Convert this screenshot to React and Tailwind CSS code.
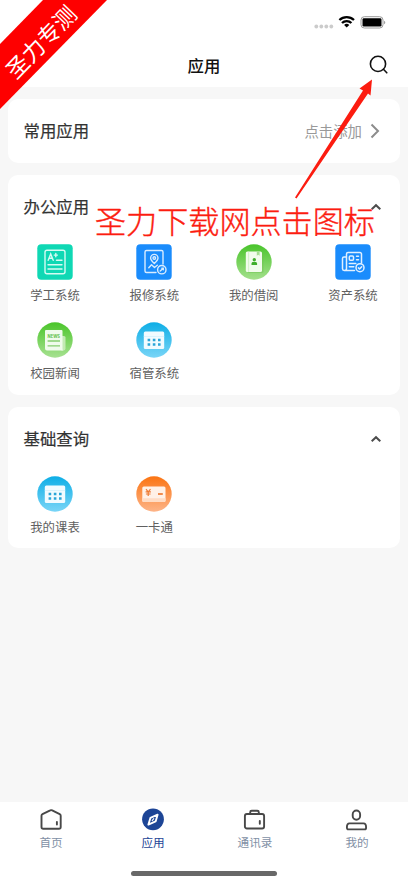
import React from "react";
import clsx from "clsx";

const Gradient = ({ id, from, to }) => (
  <linearGradient id={id} x1="0" y1="0" x2="0" y2="1">
    <stop offset="0" stopColor={from} />
    <stop offset="1" stopColor={to} />
  </linearGradient>
);

const StudentIcon = () => (
  <svg viewBox="0 0 36 36" className="size-9">
    <rect x="0.3" y="0.3" width="35.4" height="35.4" rx="4" fill="#0fd8b4" />
    <g fill="none" stroke="#d5fbf2" strokeWidth="1.4" strokeLinecap="round">
      <rect x="8" y="6.2" width="20" height="23.6" rx="2" />
      <path d="M19.5 16.2h5.5M11 20.7h14M11 25h14" />
      <path d="M11.2 16.3l2.5-6.4 2.5 6.4M12.2 14.3h3M18.8 9.5v3.2M17.2 11.1h3.2" />
    </g>
  </svg>
);

const RepairIcon = () => (
  <svg viewBox="0 0 36 36" className="size-9">
    <rect x="0.3" y="0.3" width="35.4" height="35.4" rx="4" fill="#1a8cfc" />
    <g fill="none" stroke="#d9ecff" strokeWidth="1.4" strokeLinecap="round" strokeLinejoin="round">
      <path d="M20 28.500h-9.500a1.500 1.500 0 0 1-1.500-1.500V8a1.500 1.500 0 0 1 1.500-1.500h15a1.500 1.500 0 0 1 1.500 1.500v12" />
      <path d="M18.300 19.500c-2.200-2-3.700-3.500-3.700-5.400a3.700 3.700 0 0 1 7.400 0c0 1.900-1.500 3.400-3.700 5.400z" />
      <circle cx="18.300" cy="14" r="1.300" />
      <path d="M12.800 23.800l2.700-3 3 2.700 2.800-2.300" />
      <circle cx="25.800" cy="25.700" r="4.200" />
      <path d="M24.200 27l3.100-2.800M25.800 24.200h1.500v1.500" />
    </g>
  </svg>
);

const BorrowIcon = () => (
  <svg viewBox="0 0 36 36" className="size-9">
    <defs>
      <Gradient id="borrow" from="#49c42b" to="#a4e08c" />
    </defs>
    <circle cx="18" cy="18" r="17.700" fill="url(#borrow)" />
    <rect x="11.500" y="9" width="16" height="20" rx="1.500" fill="#6dbf50" opacity="0.4" />
    <rect x="9.800" y="7.600" width="16.200" height="20.400" rx="1.500" fill="#f1fcec" />
    <path d="M12.600 7.600v20.400" stroke="#cdeec2" strokeWidth="0.800" />
    <path d="M20.800 7.600h2.800v4.200l-1.400-1.100-1.400 1.100z" fill="#a5dc92" />
    <circle cx="18.300" cy="15.800" r="1.700" fill="#3fae2b" />
    <path d="M15.500 21v-1.300c0-1.100.7-1.700 1.700-1.700h2.200c1 0 1.700.6 1.700 1.700V21z" fill="#3fae2b" />
  </svg>
);

const AssetIcon = () => (
  <svg viewBox="0 0 36 36" className="size-9">
    <rect x="0.3" y="0.3" width="35.4" height="35.4" rx="4" fill="#1a8cfc" />
    <g fill="none" stroke="#e1f0ff" strokeWidth="1.500" strokeLinecap="round" strokeLinejoin="round">
      <path d="M19.500 26.500H9.200a1.700 1.700 0 0 1-1.700-1.700V14.500a1.500 1.500 0 0 1 1.500-1.500h2.500v11.500a2 2 0 0 1-2 2M11.500 13v-3a1.500 1.500 0 0 1 1.500-1.500h12a1.500 1.500 0 0 1 1.500 1.500v9" />
      <rect x="14.300" y="12" width="4.200" height="4.200" rx="1" />
      <path d="M21.500 12.300h2M21.500 15.700h2M14.300 19.500h6.500M14.300 22.700h4.500" />
      <circle cx="25" cy="23.700" r="4" />
      <path d="M23.400 23.900l1.200 1.100 2.100-2.200" />
    </g>
  </svg>
);

const NewsIcon = () => (
  <svg viewBox="0 0 36 36" className="size-9">
    <defs>
      <Gradient id="news" from="#4ac52a" to="#a7e191" />
    </defs>
    <circle cx="18" cy="18" r="17.700" fill="url(#news)" />
    <path d="M24 14h3a1.500 1.500 0 0 1 1.500 1.500v11a2 2 0 0 1-2 2H24z" fill="#c3eab4" />
    <path d="M9 8h15.500a1 1 0 0 1 1 1v17.500a2 2 0 0 0 1 2H10a2 2 0 0 1-2-2V9a1 1 0 0 1 1-1z" fill="#f0fbec" />
    <text x="16.800" y="15.600" textAnchor="middle" fontSize="4.400" fontWeight="700" fill="#63bf4a" textLength="12.500" lengthAdjust="spacingAndGlyphs" fontFamily="Inter, sans-serif">NEWS</text>
    <path d="M10.600 19h12.400M10.600 23.800h12.400" stroke="#86ce70" strokeWidth="1.300" />
  </svg>
);

const CalendarIcon = () => (
  <svg viewBox="0 0 36 36" className="size-9">
    <defs>
      <Gradient id="calendar" from="#0eaee6" to="#79d5f7" />
    </defs>
    <circle cx="18" cy="18" r="17.700" fill="url(#calendar)" />
    <rect x="7.800" y="9.500" width="20.400" height="17.500" rx="1.500" fill="#f1fbff" />
    <path d="M7.800 14.500h20.400" stroke="#d4f1fc" strokeWidth="0.800" />
    <path d="M11.600 18.100h2.600M16.800 18.100h2.600M22 18.100h2.600M11.600 22.500h2.600M16.800 22.500h2.600M22 22.500h2.600" stroke="#2aa5d8" strokeWidth="2.500" />
  </svg>
);

const CardIcon = () => (
  <svg viewBox="0 0 36 36" className="size-9">
    <defs>
      <Gradient id="card" from="#fb7412" to="#fdb488" />
    </defs>
    <circle cx="18" cy="18" r="17.700" fill="url(#card)" />
    <rect x="6.300" y="10.500" width="23.200" height="15.500" rx="1.500" fill="#fff1e7" />
    <path d="M6.300 22.300h23.200v2.200a1.500 1.500 0 0 1-1.500 1.500H7.800a1.500 1.500 0 0 1-1.500-1.500z" fill="#ffdcc5" />
    <path d="M10 13.200l2.200 2.600 2.300-2.600M12.200 15.800v4.200M9.600 15.800h5.300M9.900 18h4.700" fill="none" stroke="#ee7a33" strokeWidth="1.200" />
    <path d="M22 18h4.800" stroke="#ee7a33" strokeWidth="1.700" />
  </svg>
);

const HomeIcon = () => (
  <svg viewBox="0 0 24 24" className="size-6" fill="none" stroke="#484848" strokeWidth="1.900" strokeLinejoin="round" strokeLinecap="round">
    <path d="M11.200 2.400a2.200 2.200 0 0 1 2 0l7.500 3.700a1.800 1.800 0 0 1 1 1.600v11.300a1.800 1.800 0 0 1-1.800 1.800H4.300a1.800 1.800 0 0 1-1.800-1.800V7.700a1.800 1.800 0 0 1 1-1.600z" />
    <path d="M17.900 14v2.600" />
  </svg>
);

const CompassIcon = () => (
  <svg viewBox="0 0 24 24" className="size-6">
    <circle cx="12" cy="11.300" r="10.900" fill="#1d4596" />
    <path d="M16.600 6.700l-2 6.700-7.200 3.200 2-6.700z" fill="none" stroke="#fff" strokeWidth="1.900" strokeLinejoin="round" />
    <path d="M12.800 10.700l-1.600 1.900" stroke="#fff" strokeWidth="1.100" strokeLinecap="round" />
  </svg>
);

const ContactsIcon = () => (
  <svg viewBox="0 0 24 24" className="size-6" fill="none" stroke="#484848" strokeWidth="1.900" strokeLinejoin="round" strokeLinecap="round">
    <rect x="1.900" y="6" width="19.200" height="14.500" rx="2" />
    <path d="M7.200 5.900V4.200a1.500 1.500 0 0 1 1.500-1.500h5.600a1.500 1.500 0 0 1 1.500 1.500v1.700M16.800 13v2.700" />
  </svg>
);

const MineIcon = () => (
  <svg viewBox="0 0 24 24" className="size-6" fill="none" stroke="#484848" strokeWidth="1.900" strokeLinejoin="round">
    <rect x="7.700" y="2.500" width="7.400" height="9.200" rx="3.700" />
    <path d="M4.500 15.400h14c1.500 0 2.600 1.700 2.600 4.100 0 1.200-.5 1.900-1.500 1.900H3.400c-1 0-1.500-.7-1.500-1.900 0-2.400 1.100-4.100 2.600-4.100z" />
  </svg>
);

const officeApps = [
  { name: "学工系统", Icon: StudentIcon },
  { name: "报修系统", Icon: RepairIcon },
  { name: "我的借阅", Icon: BorrowIcon },
  { name: "资产系统", Icon: AssetIcon },
  { name: "校园新闻", Icon: NewsIcon },
  { name: "宿管系统", Icon: CalendarIcon },
];

const queryApps = [
  { name: "我的课表", Icon: CalendarIcon },
  { name: "一卡通", Icon: CardIcon },
];

const tabs = [
  { name: "首页", Icon: HomeIcon },
  { name: "应用", Icon: CompassIcon, active: true },
  { name: "通讯录", Icon: ContactsIcon },
  { name: "我的", Icon: MineIcon },
];

const StatusBar = () => (
  <div className="flex h-11 items-center justify-end pr-[22px]">
    <svg viewBox="0 0 72 14" className="h-[14px] w-[72px]">
      <g fill="#cbcbcb">
        <circle cx="2.300" cy="11.500" r="1.900" />
        <circle cx="7.300" cy="11.500" r="1.900" />
        <circle cx="12.300" cy="11.500" r="1.900" />
        <circle cx="17.300" cy="11.500" r="1.900" />
      </g>
      <g fill="none" stroke="#000" strokeWidth="2.300">
        <path d="M25.400 5a10.700 10.700 0 0 1 14.600 0" />
        <path d="M28 8a6.600 6.600 0 0 1 9.400 0" />
      </g>
      <path d="M30.100 10a3.700 3.700 0 0 1 5.200 0l-2.600 2.600z" />
      <rect x="47" y="1.700" width="22" height="11.300" rx="3.300" fill="none" stroke="#9b9b9b" />
      <rect x="48.500" y="3.200" width="19" height="8.300" rx="1.300" />
      <path d="M70.200 5.700c1.400.5 1.400 2.900 0 3.500z" fill="#8a8a8a" />
    </svg>
  </div>
);

const CaretUp = () => (
  <svg viewBox="0 0 12 8" className="h-2 w-3" fill="none" stroke="#4c4c4c" strokeWidth="2">
    <path d="M1.700 6.300L6 2.200l4.300 4.100" />
  </svg>
);

const SectionTitle = ({ children }) => (
  <h2 className="pb-px text-[16.4px] text-[#333] [-webkit-text-stroke:0.2px]">{children}</h2>
);

const AppSection = ({ title, apps, className }) => (
  <section className={clsx("rounded-[10px] bg-white", className)}>
    <div className="flex h-16 items-center justify-between pr-[18px] pl-[15.5px]">
      <SectionTitle>{title}</SectionTitle>
      <CaretUp />
    </div>
    <div className="grid grid-cols-[repeat(4,94px)] justify-between gap-y-[11px] pt-[5px]">
      {apps.map(({ name, Icon }) => (
        <div key={name} className="flex h-[67px] flex-col items-center">
          <Icon />
          <span className="mt-[5px] text-[12.4px] leading-5 text-[#606060]">{name}</span>
        </div>
      ))}
    </div>
  </section>
);

const App = () => {
  return (
    <div className="relative flex h-[883px] w-[408px] flex-col overflow-hidden bg-[#f7f7f7] font-['Noto_Sans_CJK_SC',sans-serif]">
      <header className="h-[87px] bg-white">
        <StatusBar />
        <div className="grid h-[42px] grid-cols-[1fr_auto_1fr] items-center px-[19px]">
          <h1 className="col-start-2 text-[16.4px] font-medium text-[#111]">应用</h1>
          <svg viewBox="0 0 20 20" className="size-5 justify-self-end" fill="none" stroke="#111" strokeWidth="1.600" strokeLinecap="round">
            <circle cx="9" cy="8.900" r="7.600" />
            <path d="M14.400 14.300l3.400 3.500" />
          </svg>
        </div>
      </header>

      <main className="flex flex-1 flex-col gap-3 px-2 pt-3">
        <section className="flex h-16 items-center justify-between rounded-[10px] bg-white pr-5 pl-[15.5px]">
          <SectionTitle>常用应用</SectionTitle>
          <div className="flex items-center gap-2">
            <span className="text-[14.4px] text-[#999]">点击添加</span>
            <svg viewBox="0 0 10 16" className="h-4 w-[10px]" fill="none" stroke="#8c8c8c" strokeWidth="2">
              <path d="M1.500 1.500L8 8l-6.500 6.500" />
            </svg>
          </div>
        </section>

        <AppSection title="办公应用" apps={officeApps} className="h-[220px]" />
        <AppSection title="基础查询" apps={queryApps} className="h-[141px]" />
      </main>

      <nav className="flex h-[81px] flex-col items-center justify-between bg-white pb-[7px]">
        <div className="grid w-full grid-cols-4 pt-[6px]">
          {tabs.map(({ name, Icon, active }) => (
            <div key={name} className="flex flex-col items-center">
              <Icon />
              <span
                className={clsx(
                  "mt-px text-[11.600px] leading-[18px]",
                  active ? "text-[#1d4596]" : "text-[#8290a5]"
                )}
              >
                {name}
              </span>
            </div>
          ))}
        </div>
        <div className="h-[5px] w-[146px] rounded-full bg-[#686868]" />
      </nav>

      {/* corner ribbon */}
      <div className="absolute top-0 left-0 h-[109px] w-[107px] bg-[#fe0000] [clip-path:polygon(43px_0,107px_0,0_109px,0_44px)]" />
      <span className="absolute top-[29px] left-[-6px] w-[92px] -rotate-[46deg] text-center text-[22.5px] leading-6 whitespace-nowrap text-white">
        圣力专测
      </span>

      {/* annotation */}
      <p className="absolute top-[197px] left-[95px] text-[31.100px] leading-[46px] font-light whitespace-nowrap text-[#fc1c10] [-webkit-text-stroke:0.35px]">
        圣力下载网点击图标
      </p>
      <svg viewBox="0 0 90 130" className="absolute top-[75px] left-[290px] h-[130px] w-[90px]" fill="#fc1c10">
        <path d="M82 4.500L80.500 20.500 78 18.500 6.500 123.500 5 122.500 73 15.500 69.500 13.500z" />
      </svg>
    </div>
  );
};

export default App;
